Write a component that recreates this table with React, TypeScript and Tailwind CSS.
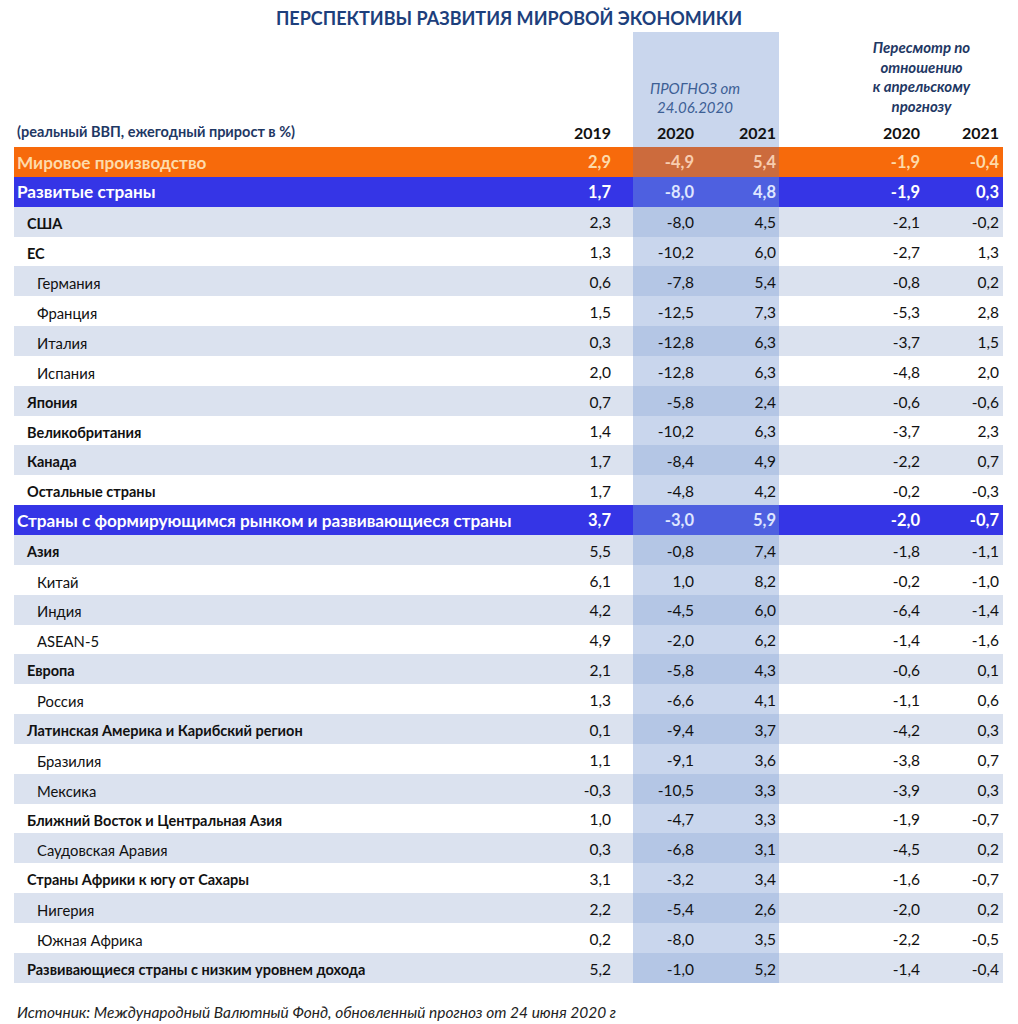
import React from "react";

type Kind = "orange" | "blue" | "bold" | "sub";
type Row = { label: string; kind: Kind; v: [string, string, string, string, string] };

const rows: Row[] = [
  { label: "Мировое производство", kind: "orange", v: ["2,9", "-4,9", "5,4", "-1,9", "-0,4"] },
  { label: "Развитые страны", kind: "blue", v: ["1,7", "-8,0", "4,8", "-1,9", "0,3"] },
  { label: "США", kind: "bold", v: ["2,3", "-8,0", "4,5", "-2,1", "-0,2"] },
  { label: "ЕС", kind: "bold", v: ["1,3", "-10,2", "6,0", "-2,7", "1,3"] },
  { label: "Германия", kind: "sub", v: ["0,6", "-7,8", "5,4", "-0,8", "0,2"] },
  { label: "Франция", kind: "sub", v: ["1,5", "-12,5", "7,3", "-5,3", "2,8"] },
  { label: "Италия", kind: "sub", v: ["0,3", "-12,8", "6,3", "-3,7", "1,5"] },
  { label: "Испания", kind: "sub", v: ["2,0", "-12,8", "6,3", "-4,8", "2,0"] },
  { label: "Япония", kind: "bold", v: ["0,7", "-5,8", "2,4", "-0,6", "-0,6"] },
  { label: "Великобритания", kind: "bold", v: ["1,4", "-10,2", "6,3", "-3,7", "2,3"] },
  { label: "Канада", kind: "bold", v: ["1,7", "-8,4", "4,9", "-2,2", "0,7"] },
  { label: "Остальные страны", kind: "bold", v: ["1,7", "-4,8", "4,2", "-0,2", "-0,3"] },
  { label: "Страны с формирующимся рынком и развивающиеся страны", kind: "blue", v: ["3,7", "-3,0", "5,9", "-2,0", "-0,7"] },
  { label: "Азия", kind: "bold", v: ["5,5", "-0,8", "7,4", "-1,8", "-1,1"] },
  { label: "Китай", kind: "sub", v: ["6,1", "1,0", "8,2", "-0,2", "-1,0"] },
  { label: "Индия", kind: "sub", v: ["4,2", "-4,5", "6,0", "-6,4", "-1,4"] },
  { label: "ASEAN-5", kind: "sub", v: ["4,9", "-2,0", "6,2", "-1,4", "-1,6"] },
  { label: "Европа", kind: "bold", v: ["2,1", "-5,8", "4,3", "-0,6", "0,1"] },
  { label: "Россия", kind: "sub", v: ["1,3", "-6,6", "4,1", "-1,1", "0,6"] },
  { label: "Латинская Америка и Карибский регион", kind: "bold", v: ["0,1", "-9,4", "3,7", "-4,2", "0,3"] },
  { label: "Бразилия", kind: "sub", v: ["1,1", "-9,1", "3,6", "-3,8", "0,7"] },
  { label: "Мексика", kind: "sub", v: ["-0,3", "-10,5", "3,3", "-3,9", "0,3"] },
  { label: "Ближний Восток и Центральная Азия", kind: "bold", v: ["1,0", "-4,7", "3,3", "-1,9", "-0,7"] },
  { label: "Саудовская Аравия", kind: "sub", v: ["0,3", "-6,8", "3,1", "-4,5", "0,2"] },
  { label: "Страны Африки к югу от Сахары", kind: "bold", v: ["3,1", "-3,2", "3,4", "-1,6", "-0,7"] },
  { label: "Нигерия", kind: "sub", v: ["2,2", "-5,4", "2,6", "-2,0", "0,2"] },
  { label: "Южная Африка", kind: "sub", v: ["0,2", "-8,0", "3,5", "-2,2", "-0,5"] },
  { label: "Развивающиеся страны с низким уровнем дохода", kind: "bold", v: ["5,2", "-1,0", "5,2", "-1,4", "-0,4"] },
];

const FONT = "font-['Lato','Open_Sans',sans-serif]";

function DataRow({ row, shaded }: { row: Row; shaded: boolean }) {
  const k = row.kind;
  let rowBg = shaded ? "bg-[#dbe2ef]" : "bg-white";
  let fcBg = shaded ? "bg-[#b4c6e5]" : "bg-[#c9d6ed]";
  let txt = "text-[#111]";
  let fcTxt = "text-[#111]";
  let labelCls = "pl-[13px] pt-[4px] font-bold text-[14.5px]";
  let numCls = "pt-[3px] text-[15.5px]";
  if (k === "sub") labelCls = "pl-[23px] pt-[4px] text-[14.8px]";
  if (k === "orange") {
    rowBg = "bg-[#f76a0b]";
    fcBg = "bg-[#cc6b3d]";
    txt = "text-[#fddbaa]";
    fcTxt = "text-[#f8cdb0]";
    labelCls = "pl-[3px] pt-[1px] font-bold text-[17.2px]";
    numCls = "pt-[1px] font-bold text-[16.5px]";
  }
  if (k === "blue") {
    rowBg = "bg-[#3535e6]";
    fcBg = "bg-[#4e60e0]";
    txt = "text-white";
    fcTxt = "text-[#dfe6ff]";
    labelCls = "pl-[3px] pt-[1px] font-bold text-[17.2px]";
    numCls = "pt-[1px] font-bold text-[16.5px]";
  }
  return (
    <div className={`flex h-[29.85px] items-center ${rowBg} ${txt}`}>
      <div className={`w-[526px] whitespace-nowrap ${labelCls}`}>{row.label}</div>
      <div className={`w-[93px] pr-[22px] text-right ${numCls}`}>{row.v[0]}</div>
      <div className={`flex h-full w-[146px] items-center ${fcBg} ${fcTxt} ${numCls}`}>
        <div className="w-[73px] pr-[12px] text-right">{row.v[1]}</div>
        <div className="w-[73px] pr-[3px] text-right">{row.v[2]}</div>
      </div>
      <div className="w-[81px]" />
      <div className={`w-[70px] pr-[10px] text-right ${numCls}`}>{row.v[3]}</div>
      <div className={`w-[73px] pr-[4px] text-right ${numCls}`}>{row.v[4]}</div>
    </div>
  );
}

export default function App() {
  let shadeIdx = 0;
  return (
    <div className={`relative h-[1024px] w-[1018px] bg-white ${FONT}`}>
      <div className="flex h-[32px] items-end justify-center pb-[5px]">
        <div className="text-[18px] font-bold leading-none text-[#1d3f7c]">
          ПЕРСПЕКТИВЫ РАЗВИТИЯ МИРОВОЙ ЭКОНОМИКИ
        </div>
      </div>
      <div className="ml-[14px] w-[989px]">
        {/* header */}
        <div className="flex h-[115px]">
          <div className="flex w-[526px] items-end pb-[4px] pl-[3px] text-[14.5px] font-bold text-[#1f3864]">
            (реальный ВВП, ежегодный прирост в %)
          </div>
          <div className="flex w-[93px] items-end justify-end pb-[2px] pr-[22px] text-[16px] font-bold text-[#111]">
            2019
          </div>
          <div className="flex w-[146px] flex-col bg-[#c9d6ed]">
            <div className="flex flex-1 flex-col items-center justify-end pb-[2px] pr-[22px] text-[15px] italic leading-[19px] text-[#3d5f95]">
              <div>ПРОГНОЗ от</div>
              <div>24.06.2020</div>
            </div>
            <div className="flex h-[28px] items-end pb-[2px] text-[16px] font-bold text-[#111]">
              <div className="w-[73px] pr-[12px] text-right">2020</div>
              <div className="w-[73px] pr-[3px] text-right">2021</div>
            </div>
          </div>
          <div className="w-[81px]" />
          <div className="flex w-[143px] flex-col">
            <div className="flex flex-1 flex-col items-center pr-[20px] pt-[6px] text-[15px] font-bold italic leading-[19.5px] text-[#1f3864]">
              <div>Пересмотр по</div>
              <div>отношению</div>
              <div>к апрельскому</div>
              <div>прогнозу</div>
            </div>
            <div className="flex h-[28px] items-end pb-[2px] text-[16px] font-bold text-[#111]">
              <div className="w-[70px] pr-[10px] text-right">2020</div>
              <div className="w-[73px] pr-[4px] text-right">2021</div>
            </div>
          </div>
        </div>
        {/* rows */}
        <div className="flex flex-col">
          {rows.map((r, i) => {
            let shaded = false;
            if (r.kind === "bold" || r.kind === "sub") {
              shaded = shadeIdx % 2 === 0;
              shadeIdx++;
            } else {
              shadeIdx = 0;
            }
            return <DataRow key={i} row={r} shaded={shaded} />;
          })}
        </div>
        <div className="mt-[18px] pl-[3px] text-[15.5px] italic text-[#222]">
          Источник: Международный Валютный Фонд, обновленный прогноз от 24 июня 2020 г
        </div>
      </div>
    </div>
  );
}
